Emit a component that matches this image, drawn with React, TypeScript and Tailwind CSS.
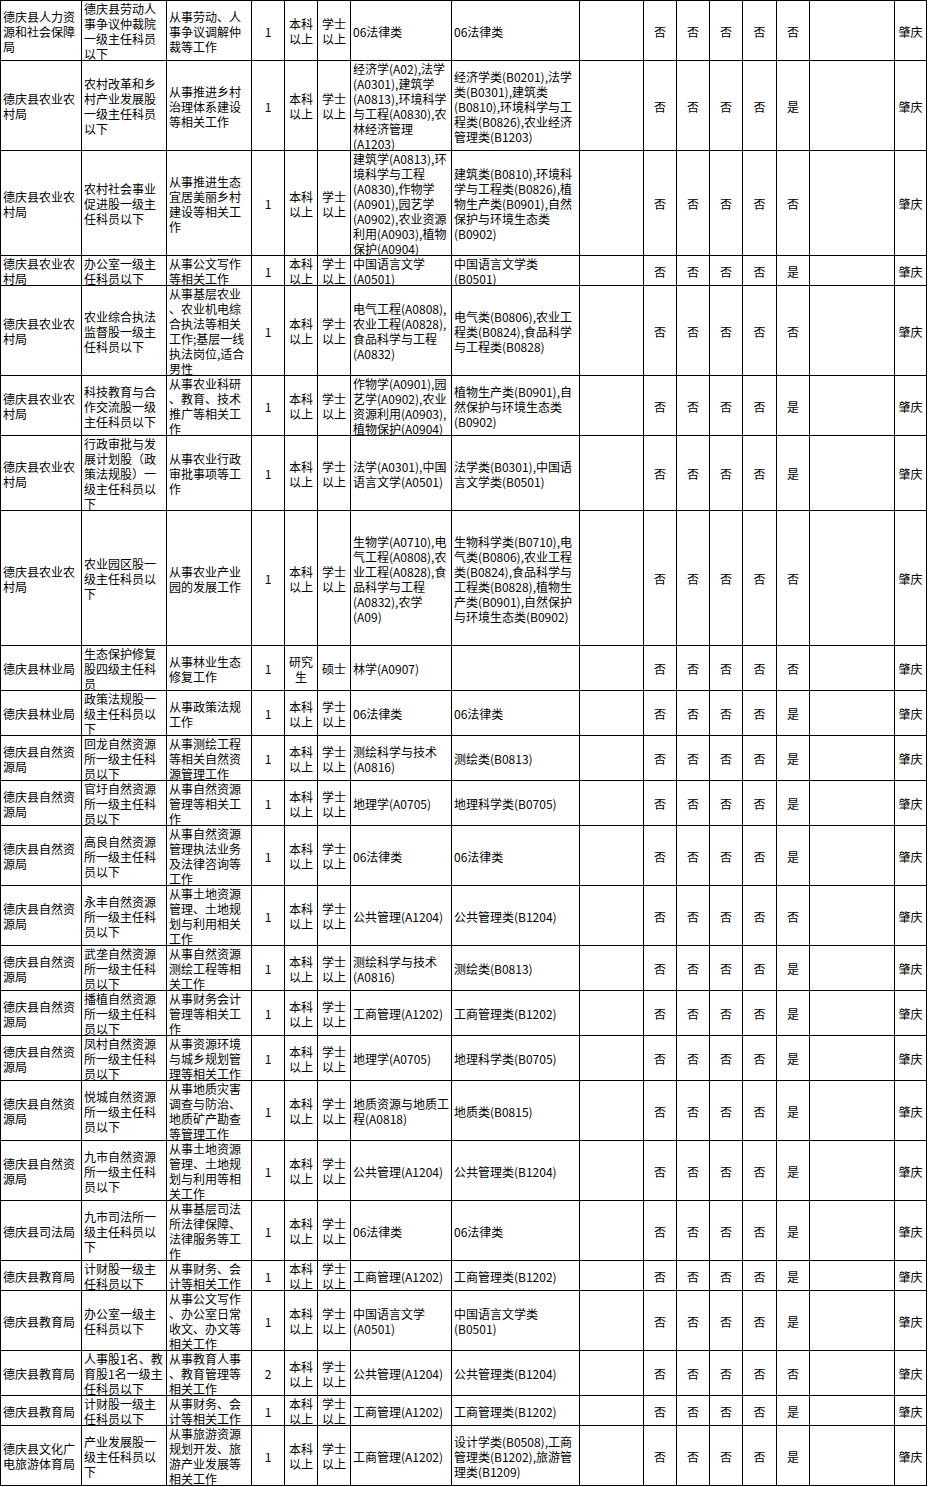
type Row = {
  h: string;
  dept: string[];
  pos: string[];
  duty: string[];
  n: string;
  edu: string[];
  deg: string[];
  m1: string[];
  m2: string[];
  flags: string[];
};

const BK = ["本科", "以上"];
const XS = ["学士", "以上"];
const NY = ["德庆县农业农", "村局"];
const ZR = ["德庆县自然资", "源局"];
const LAW = ["06法律类"];
const F0 = ["否", "否", "否", "否", "否"];
const F1 = ["否", "否", "否", "否", "是"];

const rows: Row[] = [
  {
    h: "h-[60px]",
    dept: ["德庆县人力资", "源和社会保障", "局"],
    pos: ["德庆县劳动人", "事争议仲裁院", "一级主任科员", "以下"],
    duty: ["从事劳动、人", "事争议调解仲", "裁等工作"],
    n: "1", edu: BK, deg: XS, m1: LAW, m2: LAW, flags: F0,
  },
  {
    h: "h-[90px]",
    dept: NY,
    pos: ["农村改革和乡", "村产业发展股", "一级主任科员", "以下"],
    duty: ["从事推进乡村", "治理体系建设", "等相关工作"],
    n: "1", edu: BK, deg: XS,
    m1: ["经济学(A02),法学", "(A0301),建筑学", "(A0813),环境科学", "与工程(A0830),农", "林经济管理", "(A1203)"],
    m2: ["经济学类(B0201),法学", "类(B0301),建筑类", "(B0810),环境科学与工", "程类(B0826),农业经济", "管理类(B1203)"],
    flags: F1,
  },
  {
    h: "h-[105px]",
    dept: NY,
    pos: ["农村社会事业", "促进股一级主", "任科员以下"],
    duty: ["从事推进生态", "宜居美丽乡村", "建设等相关工", "作"],
    n: "1", edu: BK, deg: XS,
    m1: ["建筑学(A0813),环", "境科学与工程", "(A0830),作物学", "(A0901),园艺学", "(A0902),农业资源", "利用(A0903),植物", "保护(A0904)"],
    m2: ["建筑类(B0810),环境科", "学与工程类(B0826),植", "物生产类(B0901),自然", "保护与环境生态类", "(B0902)"],
    flags: F0,
  },
  {
    h: "h-[30px]",
    dept: NY,
    pos: ["办公室一级主", "任科员以下"],
    duty: ["从事公文写作", "等相关工作"],
    n: "1", edu: BK, deg: XS,
    m1: ["中国语言文学", "(A0501)"],
    m2: ["中国语言文学类", "(B0501)"],
    flags: F1,
  },
  {
    h: "h-[90px]",
    dept: NY,
    pos: ["农业综合执法", "监督股一级主", "任科员以下"],
    duty: ["从事基层农业", "、农业机电综", "合执法等相关", "工作;基层一线", "执法岗位,适合", "男性"],
    n: "1", edu: BK, deg: XS,
    m1: ["电气工程(A0808),", "农业工程(A0828),", "食品科学与工程", "(A0832)"],
    m2: ["电气类(B0806),农业工", "程类(B0824),食品科学", "与工程类(B0828)"],
    flags: F0,
  },
  {
    h: "h-[60px]",
    dept: NY,
    pos: ["科技教育与合", "作交流股一级", "主任科员以下"],
    duty: ["从事农业科研", "、教育、技术", "推广等相关工", "作"],
    n: "1", edu: BK, deg: XS,
    m1: ["作物学(A0901),园", "艺学(A0902),农业", "资源利用(A0903),", "植物保护(A0904)"],
    m2: ["植物生产类(B0901),自", "然保护与环境生态类", "(B0902)"],
    flags: F1,
  },
  {
    h: "h-[75px]",
    dept: NY,
    pos: ["行政审批与发", "展计划股（政", "策法规股）一", "级主任科员以", "下"],
    duty: ["从事农业行政", "审批事项等工", "作"],
    n: "1", edu: BK, deg: XS,
    m1: ["法学(A0301),中国", "语言文学(A0501)"],
    m2: ["法学类(B0301),中国语", "言文学类(B0501)"],
    flags: F1,
  },
  {
    h: "h-[135px]",
    dept: NY,
    pos: ["农业园区股一", "级主任科员以", "下"],
    duty: ["从事农业产业", "园的发展工作"],
    n: "1", edu: BK, deg: XS,
    m1: ["生物学(A0710),电", "气工程(A0808),农", "业工程(A0828),食", "品科学与工程", "(A0832),农学", "(A09)"],
    m2: ["生物科学类(B0710),电", "气类(B0806),农业工程", "类(B0824),食品科学与", "工程类(B0828),植物生", "产类(B0901),自然保护", "与环境生态类(B0902)"],
    flags: F0,
  },
  {
    h: "h-[45px]",
    dept: ["德庆县林业局"],
    pos: ["生态保护修复", "股四级主任科", "员"],
    duty: ["从事林业生态", "修复工作"],
    n: "1", edu: ["研究", "生"], deg: ["硕士"],
    m1: ["林学(A0907)"], m2: [],
    flags: F0,
  },
  {
    h: "h-[45px]",
    dept: ["德庆县林业局"],
    pos: ["政策法规股一", "级主任科员以", "下"],
    duty: ["从事政策法规", "工作"],
    n: "1", edu: BK, deg: XS, m1: LAW, m2: LAW, flags: F1,
  },
  {
    h: "h-[45px]",
    dept: ZR,
    pos: ["回龙自然资源", "所一级主任科", "员以下"],
    duty: ["从事测绘工程", "等相关自然资", "源管理工作"],
    n: "1", edu: BK, deg: XS,
    m1: ["测绘科学与技术", "(A0816)"], m2: ["测绘类(B0813)"],
    flags: F1,
  },
  {
    h: "h-[45px]",
    dept: ZR,
    pos: ["官圩自然资源", "所一级主任科", "员以下"],
    duty: ["从事自然资源", "管理等相关工", "作"],
    n: "1", edu: BK, deg: XS,
    m1: ["地理学(A0705)"], m2: ["地理科学类(B0705)"],
    flags: F1,
  },
  {
    h: "h-[60px]",
    dept: ZR,
    pos: ["高良自然资源", "所一级主任科", "员以下"],
    duty: ["从事自然资源", "管理执法业务", "及法律咨询等", "工作"],
    n: "1", edu: BK, deg: XS, m1: LAW, m2: LAW, flags: F1,
  },
  {
    h: "h-[60px]",
    dept: ZR,
    pos: ["永丰自然资源", "所一级主任科", "员以下"],
    duty: ["从事土地资源", "管理、土地规", "划与利用相关", "工作"],
    n: "1", edu: BK, deg: XS,
    m1: ["公共管理(A1204)"], m2: ["公共管理类(B1204)"],
    flags: F0,
  },
  {
    h: "h-[45px]",
    dept: ZR,
    pos: ["武垄自然资源", "所一级主任科", "员以下"],
    duty: ["从事自然资源", "测绘工程等相", "关工作"],
    n: "1", edu: BK, deg: XS,
    m1: ["测绘科学与技术", "(A0816)"], m2: ["测绘类(B0813)"],
    flags: F1,
  },
  {
    h: "h-[45px]",
    dept: ZR,
    pos: ["播植自然资源", "所一级主任科", "员以下"],
    duty: ["从事财务会计", "管理等相关工", "作"],
    n: "1", edu: BK, deg: XS,
    m1: ["工商管理(A1202)"], m2: ["工商管理类(B1202)"],
    flags: F1,
  },
  {
    h: "h-[45px]",
    dept: ZR,
    pos: ["凤村自然资源", "所一级主任科", "员以下"],
    duty: ["从事资源环境", "与城乡规划管", "理等相关工作"],
    n: "1", edu: BK, deg: XS,
    m1: ["地理学(A0705)"], m2: ["地理科学类(B0705)"],
    flags: F1,
  },
  {
    h: "h-[60px]",
    dept: ZR,
    pos: ["悦城自然资源", "所一级主任科", "员以下"],
    duty: ["从事地质灾害", "调查与防治、", "地质矿产勘查", "等管理工作"],
    n: "1", edu: BK, deg: XS,
    m1: ["地质资源与地质工", "程(A0818)"], m2: ["地质类(B0815)"],
    flags: F1,
  },
  {
    h: "h-[60px]",
    dept: ZR,
    pos: ["九市自然资源", "所一级主任科", "员以下"],
    duty: ["从事土地资源", "管理、土地规", "划与利用等相", "关工作"],
    n: "1", edu: BK, deg: XS,
    m1: ["公共管理(A1204)"], m2: ["公共管理类(B1204)"],
    flags: F1,
  },
  {
    h: "h-[60px]",
    dept: ["德庆县司法局"],
    pos: ["九市司法所一", "级主任科员以", "下"],
    duty: ["从事基层司法", "所法律保障、", "法律服务等工", "作"],
    n: "1", edu: BK, deg: XS, m1: LAW, m2: LAW, flags: F1,
  },
  {
    h: "h-[30px]",
    dept: ["德庆县教育局"],
    pos: ["计财股一级主", "任科员以下"],
    duty: ["从事财务、会", "计等相关工作"],
    n: "1", edu: BK, deg: XS,
    m1: ["工商管理(A1202)"], m2: ["工商管理类(B1202)"],
    flags: F1,
  },
  {
    h: "h-[60px]",
    dept: ["德庆县教育局"],
    pos: ["办公室一级主", "任科员以下"],
    duty: ["从事公文写作", "、办公室日常", "收文、办文等", "相关工作"],
    n: "1", edu: BK, deg: XS,
    m1: ["中国语言文学", "(A0501)"], m2: ["中国语言文学类", "(B0501)"],
    flags: F1,
  },
  {
    h: "h-[45px]",
    dept: ["德庆县教育局"],
    pos: ["人事股1名、教", "育股1名一级主", "任科员以下"],
    duty: ["从事教育人事", "、教育管理等", "相关工作"],
    n: "2", edu: BK, deg: XS,
    m1: ["公共管理(A1204)"], m2: ["公共管理类(B1204)"],
    flags: F0,
  },
  {
    h: "h-[30px]",
    dept: ["德庆县教育局"],
    pos: ["计财股一级主", "任科员以下"],
    duty: ["从事财务、会", "计等相关工作"],
    n: "1", edu: BK, deg: XS,
    m1: ["工商管理(A1202)"], m2: ["工商管理类(B1202)"],
    flags: F1,
  },
  {
    h: "h-[60px]",
    dept: ["德庆县文化广", "电旅游体育局"],
    pos: ["产业发展股一", "级主任科员以", "下"],
    duty: ["从事旅游资源", "规划开发、旅", "游产业发展等", "相关工作"],
    n: "1", edu: BK, deg: XS,
    m1: ["工商管理(A1202)"],
    m2: ["设计学类(B0508),工商", "管理类(B1202),旅游管", "理类(B1209)"],
    flags: F1,
  },
];

function Cell({ lines, center }: { lines: string[]; center?: boolean }) {
  return (
    <div
      className={
        "flex flex-col justify-center overflow-hidden border-r border-b border-black pt-[1px] " +
        (center ? "items-center" : "items-start pl-[2px]")
      }
    >
      {lines.map((l, i) => (
        <div key={i} className="whitespace-nowrap">
          {l}
        </div>
      ))}
    </div>
  );
}

export default function App() {
  return (
    <div className="bg-white min-h-[1487px] text-black font-['Noto_Sans_CJK_SC',sans-serif] text-[12px] leading-[15px]">
      <div className="w-[927px] border-l border-t border-black">
        {rows.map((r, i) => (
          <div
            key={i}
            className={
              "grid grid-cols-[81px_85px_85px_33px_33px_33px_101px_128px_64px_33px_33px_33px_34px_33px_85px_32px] " +
              r.h
            }
          >
            <Cell lines={r.dept} />
            <Cell lines={r.pos} />
            <Cell lines={r.duty} />
            <Cell lines={[r.n]} center />
            <Cell lines={r.edu} center />
            <Cell lines={r.deg} center />
            <Cell lines={r.m1} />
            <Cell lines={r.m2} />
            <Cell lines={[]} />
            {r.flags.map((f, j) => (
              <Cell key={j} lines={[f]} center />
            ))}
            <Cell lines={[]} />
            <Cell lines={["肇庆"]} center />
          </div>
        ))}
      </div>
    </div>
  );
}
